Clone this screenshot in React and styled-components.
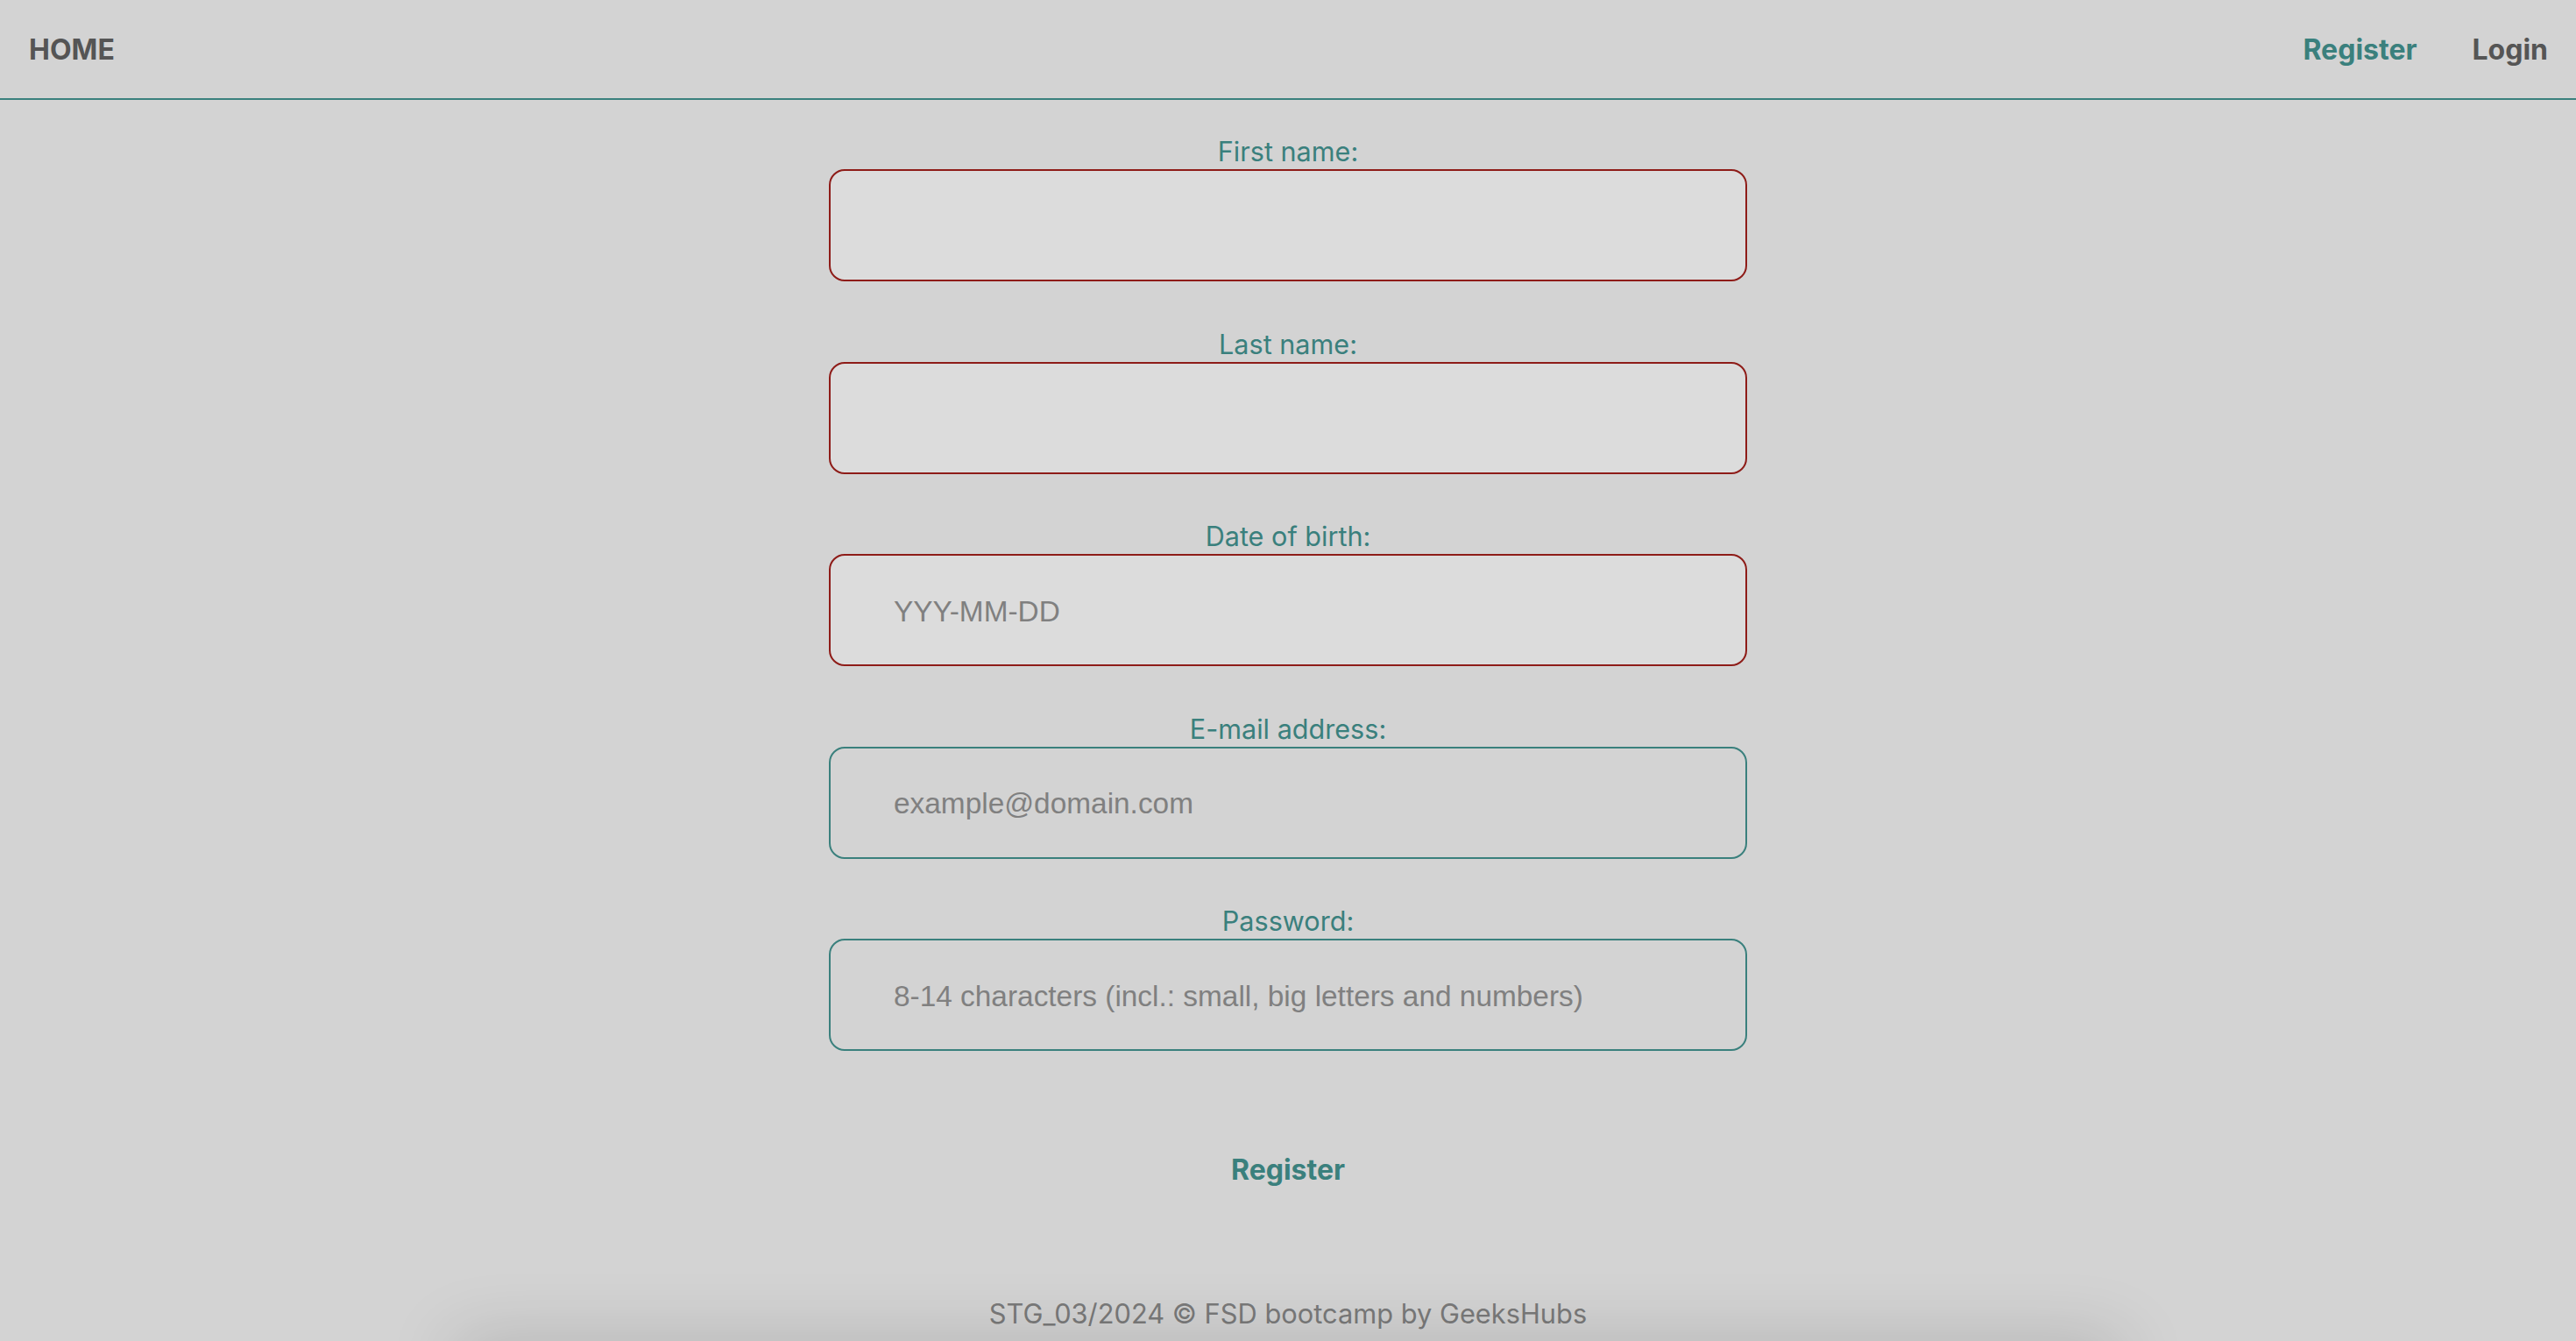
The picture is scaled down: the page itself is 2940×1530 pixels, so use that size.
import React from "react";
import styled, { createGlobalStyle } from "styled-components";

const TEAL = "#3a807d";
const RED = "#8e1c18";
const GRAY = "#555555";

const Global = createGlobalStyle`
  html, body {
    margin: 0;
    padding: 0;
    background: #d3d3d3;
    overflow: hidden;
  }
  body {
    font-family: Inter, "Noto Sans", sans-serif;
  }
  * { box-sizing: border-box; }
`;

const Page = styled.div`
  min-height: 100vh;
  display: flex;
  flex-direction: column;
  background: #d3d3d3;
`;

const NavBar = styled.nav`
  height: 114px;
  border-bottom: 2px solid ${TEAL};
  display: flex;
  align-items: center;
  justify-content: space-between;
  padding: 2px 32px 0 33px;
`;

const NavGroup = styled.div`
  display: flex;
  align-items: center;
  gap: 63px;
`;

const NavLink = styled.a`
  font-family: Inter, sans-serif;
  font-weight: 700;
  font-size: 32px;
  line-height: 38px;
  color: ${(p) => (p.$active ? TEAL : GRAY)};
  text-decoration: none;
  cursor: pointer;
`;

const Form = styled.form`
  display: flex;
  flex-direction: column;
  align-items: center;
  gap: 53.5px;
  padding-top: 41px;
`;

const Field = styled.div`
  display: flex;
  flex-direction: column;
  align-items: center;
`;

const Label = styled.label`
  font-family: Inter, sans-serif;
  font-size: 30.6px;
  line-height: 36px;
  color: ${TEAL};
  margin-bottom: 2px;
`;

const Input = styled.input`
  width: 1048px;
  height: 128px;
  border: 2px solid ${(p) => (p.$invalid ? RED : TEAL)};
  border-radius: 18px;
  background: ${(p) => (p.$invalid ? "#dcdcdc" : "#d3d3d3")};
  padding: 3px 72px 0;
  font-family: "Liberation Sans", Arial, sans-serif;
  font-size: 33.4px;
  color: ${GRAY};
  outline: none;
  &::placeholder {
    color: #808080;
  }
`;

const SubmitButton = styled.button`
  margin-top: 64px;
  background: none;
  border: none;
  padding: 0;
  font-family: Inter, sans-serif;
  font-weight: 700;
  font-size: 32px;
  line-height: 36px;
  color: ${TEAL};
  cursor: pointer;
`;

const Footer = styled.footer`
  margin-top: auto;
  position: relative;
  display: flex;
  justify-content: center;
  padding-bottom: 13px;
  &::after {
    content: "";
    position: absolute;
    top: 100%;
    left: 50%;
    transform: translateX(-50%);
    width: 1900px;
    height: 60px;
    box-shadow: 0 0 80px 0 rgba(0, 0, 0, 0.17);
  }
`;

const FooterText = styled.span`
  font-family: Inter, sans-serif;
  font-size: 30.8px;
  line-height: 36px;
  color: #7a7a7a;
`;

const fields = [
  { label: "First name:", placeholder: "", invalid: true, type: "text" },
  { label: "Last name:", placeholder: "", invalid: true, type: "text" },
  { label: "Date of birth:", placeholder: "YYY-MM-DD", invalid: true, type: "text" },
  { label: "E-mail address:", placeholder: "example@domain.com", invalid: false, type: "email" },
  {
    label: "Password:",
    placeholder: "8-14 characters (incl.: small, big letters and numbers)",
    invalid: false,
    type: "password",
  },
];

export default function App() {
  return (
    <>
      <Global />
      <Page>
        <NavBar>
          <NavLink>HOME</NavLink>
          <NavGroup>
            <NavLink $active>Register</NavLink>
            <NavLink>Login</NavLink>
          </NavGroup>
        </NavBar>
        <Form onSubmit={(e) => e.preventDefault()}>
          {fields.map((f) => (
            <Field key={f.label}>
              <Label>{f.label}</Label>
              <Input type={f.type} placeholder={f.placeholder} $invalid={f.invalid} />
            </Field>
          ))}
          <SubmitButton type="submit">Register</SubmitButton>
        </Form>
        <Footer>
          <FooterText>STG_03/2024 © FSD bootcamp by GeeksHubs</FooterText>
        </Footer>
      </Page>
    </>
  );
}
